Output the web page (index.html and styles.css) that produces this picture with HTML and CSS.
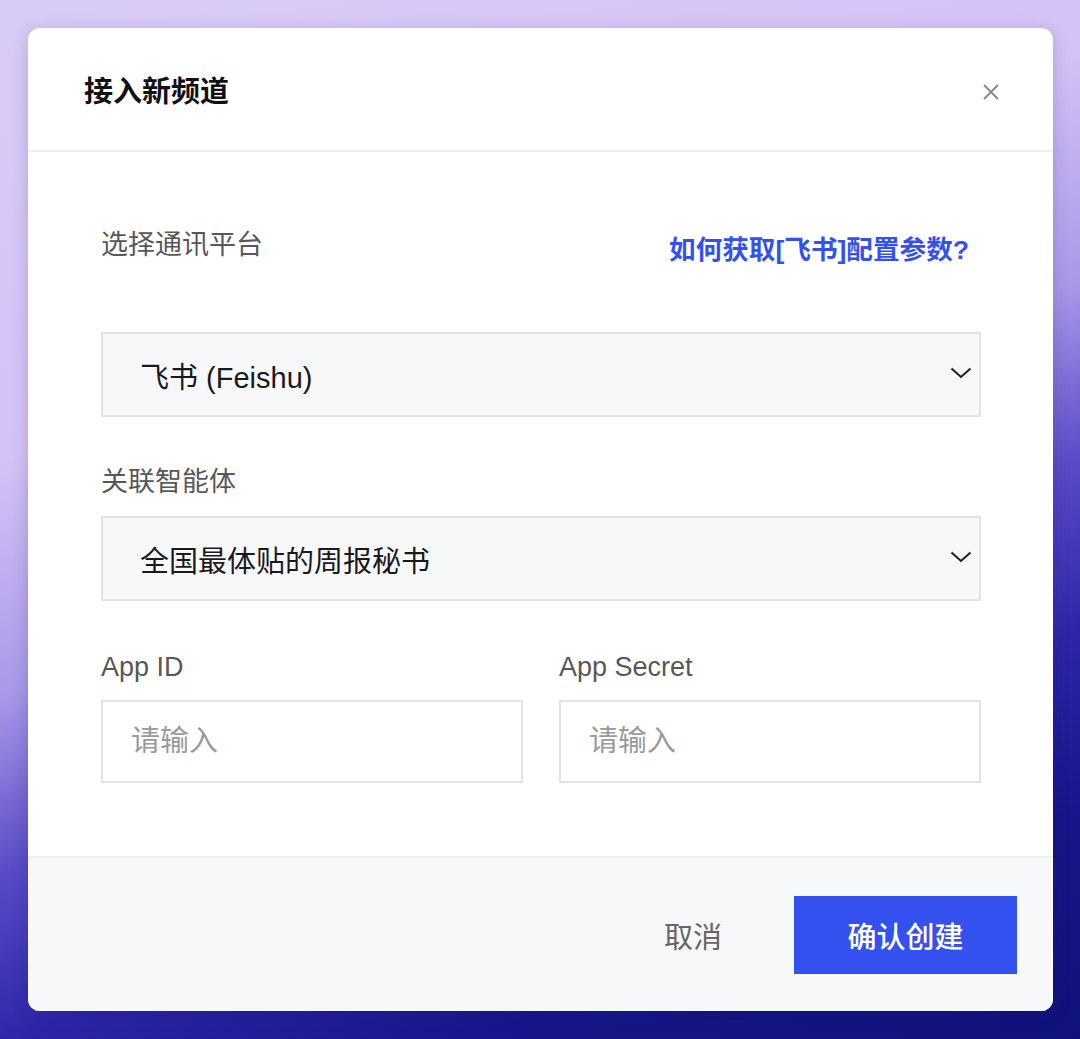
FILE: index.html
```html
<!DOCTYPE html>
<html lang="zh-CN">
<head>
  <meta charset="UTF-8">
  <title>接入新频道</title>
  <meta name="viewport" content="width=device-width, initial-scale=1.0">
  <link rel="stylesheet" href="styles.css">
</head>
<body>
  <div class="modal">
    <div class="modal-header">
      <h1>接入新频道</h1>
      <button class="close" aria-label="关闭">
        <svg width="16" height="16" viewBox="0 0 16 16"><path d="M1 1L15 15M15 1L1 15" stroke="#8a8a8a" stroke-width="2" fill="none"/></svg>
      </button>
    </div>

    <div class="modal-body">
      <div class="row-top">
        <label class="label">选择通讯平台</label>
        <a class="help-link" href="#">如何获取[飞书]配置参数?</a>
      </div>
      <div class="select select-platform">
        <span>飞书 (Feishu)</span>
        <svg width="22" height="12" viewBox="0 0 22 12"><path d="M1.5 1.5L11 10L20.5 1.5" stroke="#1f1f1f" stroke-width="2" fill="none"/></svg>
      </div>

      <label class="label label-agent">关联智能体</label>
      <div class="select">
        <span>全国最体贴的周报秘书</span>
        <svg width="22" height="12" viewBox="0 0 22 12"><path d="M1.5 1.5L11 10L20.5 1.5" stroke="#1f1f1f" stroke-width="2" fill="none"/></svg>
      </div>

      <div class="field-grid">
        <div class="field">
          <label class="label">App ID</label>
          <input type="text" placeholder="请输入">
        </div>
        <div class="field">
          <label class="label">App Secret</label>
          <input type="text" placeholder="请输入">
        </div>
      </div>
    </div>

    <div class="modal-footer">
      <button class="btn-cancel">取消</button>
      <button class="btn-primary">确认创建</button>
    </div>
  </div>
</body>
</html>
```

FILE: styles.css
```css
:root {
  --primary: #3450ef;
  --text: #141414;
  --label: #585858;
  --muted: #9a9a9a;
  --field-bg: #f7f8fa;
  --field-border: #e2e2e2;
  --line: #efefef;
}

* {
  box-sizing: border-box;
}

html, body {
  height: 100%;
}

body {
  margin: 0;
  padding: 28px 27px 28px 28px;
  font-family: "Liberation Sans", "Noto Sans CJK SC", sans-serif;
  color: var(--text);
  background: linear-gradient(159deg, #d9cbf7 0%, #d3c2f5 32%, #a997e8 48%, #5a4cc8 60%, #2c26a6 72%, #17168a 84%, #10127a 100%);
}

.modal {
  width: 1025px;
  height: 983px;
  background: #fff;
  border-radius: 12px;
  overflow: hidden;
  display: flex;
  flex-direction: column;
  box-shadow: 0 4px 18px rgba(30, 20, 90, 0.18);
}

.modal-header {
  height: 124px;
  flex: none;
  display: flex;
  align-items: center;
  justify-content: space-between;
  padding: 0 54px 0 56px;
  border-bottom: 2px solid var(--line);
}

.modal-header h1 {
  margin: 0;
  font-size: 29px;
  font-weight: 700;
  color: #111;
}

.close {
  border: none;
  background: none;
  padding: 0;
  width: 16px;
  height: 16px;
  margin-top: 6px;
  cursor: pointer;
}

.modal-body {
  flex: 1;
  padding: 75px 72px 0 73px;
}

.label {
  display: block;
  font-size: 27px;
  line-height: 36px;
  color: var(--label);
}

.row-top {
  display: flex;
  justify-content: space-between;
  align-items: flex-start;
  margin-bottom: 64px;
}

.help-link {
  margin-top: 5px;
  margin-right: 12px;
  font-size: 26.6px;
  line-height: 36px;
  font-weight: 700;
  color: var(--primary);
  text-decoration: none;
}

.select {
  height: 85px;
  display: flex;
  align-items: center;
  justify-content: space-between;
  padding: 0 7px 0 37px;
  background: var(--field-bg);
  border: 2px solid var(--field-border);
  font-size: 29px;
  color: #1a1a1a;
}

.select svg {
  margin-top: -3px;
}

.label-agent {
  margin: 47px 0 16px;
}

.field-grid {
  display: grid;
  grid-template-columns: 1fr 1fr;
  column-gap: 36px;
  margin-top: 48px;
}

.field .label {
  margin-bottom: 15px;
}

.field input {
  width: 100%;
  height: 83px;
  padding: 0 28px;
  border: 2px solid var(--field-border);
  background: #fff;
  font-family: inherit;
  font-size: 29px;
  color: var(--text);
  outline: none;
}

.field input::placeholder {
  color: var(--muted);
}

.modal-footer {
  height: 155px;
  flex: none;
  display: flex;
  align-items: center;
  justify-content: flex-end;
  gap: 72px;
  padding: 0 36px 0 0;
  background: var(--field-bg);
  border-top: 2px solid var(--line);
}

.btn-cancel {
  border: none;
  background: none;
  padding: 0;
  font-family: inherit;
  font-size: 29px;
  color: #666;
  cursor: pointer;
}

.btn-primary {
  width: 223px;
  height: 78px;
  border: none;
  background: var(--primary);
  color: #fff;
  font-family: inherit;
  font-size: 29px;
  font-weight: 500;
  cursor: pointer;
}
```
